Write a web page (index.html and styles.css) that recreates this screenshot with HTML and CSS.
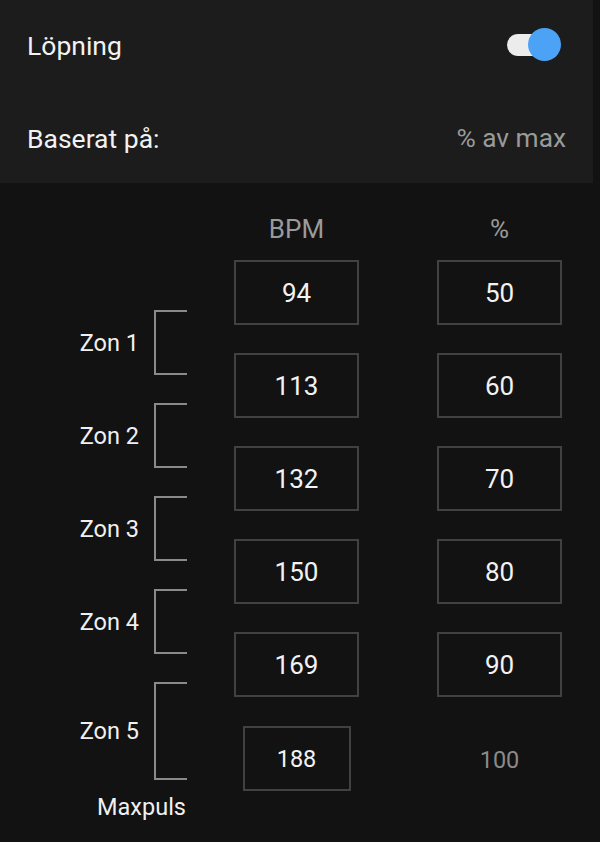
FILE: index.html
```html
<!DOCTYPE html>
<html lang="sv">
<head>
<meta charset="utf-8">
<link rel="stylesheet" href="styles.css">
</head>
<body>
<div class="header">
  <div class="row row-first">
    <span class="title">Löpning</span>
    <span class="toggle"><span class="track"></span><span class="thumb"></span></span>
  </div>
  <div class="row row-second">
    <span class="title">Baserat på:</span>
    <span class="value">% av max</span>
  </div>
</div>
<div class="main">
  <div class="zones">
    <div class="zone"><span class="zone-label">Zon 1</span><span class="bracket"></span></div>
    <div class="zone"><span class="zone-label">Zon 2</span><span class="bracket"></span></div>
    <div class="zone"><span class="zone-label">Zon 3</span><span class="bracket"></span></div>
    <div class="zone"><span class="zone-label">Zon 4</span><span class="bracket"></span></div>
    <div class="zone zone-last"><span class="zone-label">Zon 5</span><span class="bracket"></span></div>
    <div class="maxpuls">Maxpuls</div>
  </div>
  <div class="col">
    <div class="col-head">BPM</div>
    <div class="box">94</div>
    <div class="box">113</div>
    <div class="box">132</div>
    <div class="box">150</div>
    <div class="box">169</div>
    <div class="box box-small">188</div>
  </div>
  <div class="col col-pct">
    <div class="col-head">%</div>
    <div class="box">50</div>
    <div class="box">60</div>
    <div class="box">70</div>
    <div class="box">80</div>
    <div class="box">90</div>
    <div class="plain">100</div>
  </div>
</div>
</body>
</html>
```
FILE: styles.css
```css
html, body {
  margin: 0;
  padding: 0;
  background: #121212;
  font-family: Roboto, "Noto Sans", sans-serif;
  color: #f0f0f0;
}
body {
  width: 600px;
  height: 842px;
  overflow: hidden;
}
.header {
  width: 593px;
  height: 183px;
  background: #1c1c1c;
  box-sizing: border-box;
  padding: 0 27px;
}
.row {
  display: flex;
  align-items: center;
  justify-content: space-between;
}
.row-first {
  height: 90px;
}
.row-second {
  height: 93px;
  padding-top: 3px;
  box-sizing: border-box;
}
.title {
  font-size: 26.5px;
  color: #f2f2f2;
}
.value {
  font-size: 26.3px;
  color: #9a9a9a;
}
.toggle {
  position: relative;
  width: 54px;
  height: 34px;
  margin-right: 5px;
}
.track {
  position: absolute;
  left: 0;
  top: 6px;
  width: 46px;
  height: 22px;
  border-radius: 11px;
  background: #ececec;
}
.thumb {
  position: absolute;
  right: 0;
  top: 0;
  width: 33px;
  height: 33px;
  border-radius: 50%;
  background: #4ca2f5;
}
.main {
  display: flex;
  padding-top: 13px;
}
.zones {
  width: 187px;
  padding-top: 114px;
  display: flex;
  flex-direction: column;
}
.zone {
  display: flex;
  align-items: center;
  height: 65px;
  margin-bottom: 28px;
}
.zone-last {
  height: 98px;
  margin-bottom: 0;
}
.zone-label {
  width: 139px;
  padding-right: 15px;
  text-align: right;
  font-size: 23.5px;
  color: #f0f0f0;
}
.bracket {
  width: 33px;
  height: 100%;
  border: 2px solid #8a8a8a;
  border-right: none;
  box-sizing: border-box;
}
.maxpuls {
  margin-top: 13px;
  text-align: right;
  font-size: 23.5px;
  padding-right: 1px;
  color: #f0f0f0;
}
.col {
  margin-left: 47px;
  width: 125px;
  display: flex;
  flex-direction: column;
  align-items: center;
}
.col-pct {
  margin-left: 78px;
}
.col-head {
  height: 64px;
  line-height: 66px;
  font-size: 26px;
  color: #9a9a9a;
}
.box {
  width: 125px;
  height: 65px;
  box-sizing: border-box;
  border: 2px solid #414141;
  display: flex;
  align-items: center;
  justify-content: center;
  padding-top: 1px;
  font-size: 26px;
  color: #f2f2f2;
  margin-bottom: 28px;
}
.box-small {
  width: 108px;
  margin-top: 1px;
  font-size: 23.5px;
}
.plain {
  height: 65px;
  margin-top: 1px;
  display: flex;
  align-items: center;
  padding-top: 1px;
  font-size: 23.5px;
  color: #8a8a8a;
}
```
